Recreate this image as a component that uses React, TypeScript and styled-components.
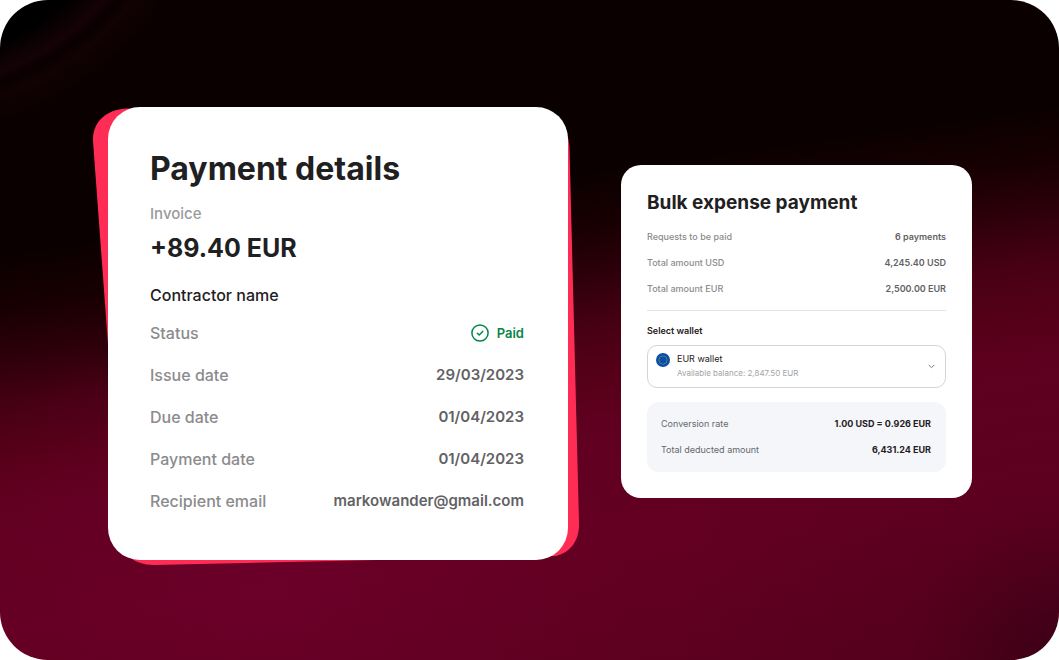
import React from "react";
import styled, { createGlobalStyle } from "styled-components";

const GlobalStyle = createGlobalStyle`
  *, *::before, *::after { box-sizing: border-box; }
  body {
    margin: 0;
    background: #ffffff;
    font-family: Inter, Roboto, sans-serif;
    color: #1f2022;
  }
  h1, h2, p, dl, dd { margin: 0; }
`;

const Stage = styled.main`
  display: grid;
  grid-template-columns: minmax(0, 460fr) minmax(0, 351fr);
  align-content: center;
  align-items: start;
  column-gap: 53px;
  min-height: 100vh;
  padding: 24px 87px 18px 108px;
  border-radius: 48px;
  background:
    radial-gradient(circle at -90px -170px, #000000 230px, rgba(22, 2, 6, 0.9) 258px, rgba(10, 0, 1, 0.8) 268px, rgba(20, 2, 5, 0.7) 280px, rgba(10, 0, 0, 0) 310px),
    radial-gradient(circle at 100% 100%, rgba(40, 0, 16, 0.6) 0, rgba(60, 0, 20, 0.2) 12%, rgba(60, 0, 20, 0) 32%),
    radial-gradient(ellipse at 25% 90%, rgba(112, 0, 44, 0.6) 0, rgba(108, 0, 40, 0) 32%),
    linear-gradient(172deg, #0a0000 0%, #0a0000 31%, #170002 38%, #2c000a 44%, #450014 50%, #560019 57%, #600020 63%, #640022 78%, #5a001e 100%);
`;

const DetailsWrap = styled.div`
  position: relative;
`;

const Backdrop = styled.svg`
  position: absolute;
  inset: 0;
  width: 100%;
  height: 100%;
  overflow: visible;
`;

const DetailsCard = styled.section`
  position: relative;
  padding: 42px 44px 38px 42px;
  border-radius: 32px;
  background: #ffffff;
`;

const Title = styled.h1`
  font-size: 32px;
  line-height: 40px;
  font-weight: 700;
`;

const Kind = styled.p`
  margin-top: 15px;
  font-size: 15px;
  line-height: 20px;
  font-weight: 500;
  color: #9a9a9c;
`;

const Amount = styled.p`
  margin-top: 8px;
  font-size: 25px;
  line-height: 32px;
  font-weight: 700;
`;

const Contractor = styled.h2`
  margin-top: 21px;
  margin-bottom: 7px;
  font-size: 16px;
  line-height: 20px;
  font-weight: 500;
`;

const Row = styled.div<{ $small?: boolean }>`
  display: flex;
  align-items: center;
  justify-content: space-between;
  gap: 12px;
  height: ${(p) => (p.$small ? 26 : 42)}px;
  font-size: ${(p) => (p.$small ? 9 : 15)}px;
`;

const Term = styled.dt<{ $large?: boolean; $plain?: boolean }>`
  font-size: ${(p) => (p.$large ? "16px" : "inherit")};
  font-weight: ${(p) => (p.$plain ? 400 : 500)};
  color: ${(p) => (p.$plain ? "#66686d" : "#8b8b8d")};
`;

const Value = styled.dd<{ $strong?: boolean }>`
  font-weight: ${(p) => (p.$strong ? 700 : 600)};
  color: ${(p) => (p.$strong ? "#1f2022" : "#626265")};
`;

const Paid = styled.dd`
  display: flex;
  align-items: center;
  gap: 8px;
  font-size: 13px;
  font-weight: 600;
  color: #078549;
`;

const BulkCard = styled.section`
  margin-top: 58px;
  padding: 24px 26px 26px;
  border-radius: 20px;
  background: #ffffff;
`;

const BulkTitle = styled.h2`
  margin-bottom: 7px;
  font-size: 19px;
  line-height: 28px;
  font-weight: 700;
`;

const Totals = styled.dl`
  padding-bottom: 8px;
  border-bottom: 1px solid #e4e4e6;
`;

const WalletLabel = styled.label`
  display: block;
  margin: 12px 0 6px;
  font-size: 9px;
  line-height: 16px;
  font-weight: 600;
`;

const WalletField = styled.div`
  display: flex;
  align-items: center;
  gap: 7px;
  height: 43px;
  padding: 0 10px 0 8px;
  border: 1px solid #d3d4d7;
  border-radius: 10px;
`;

const Flag = styled.svg`
  align-self: flex-start;
  flex: none;
  margin-top: 7px;
`;

const WalletText = styled.div`
  flex: 1;
  min-width: 0;
`;

const WalletSelect = styled.select`
  display: block;
  width: 100%;
  height: 14px;
  padding: 0;
  border: 0;
  appearance: none;
  background: transparent;
  font: 400 9px/14px Inter, Roboto, sans-serif;
  color: #1f2022;
`;

const Balance = styled.p`
  font-size: 8px;
  line-height: 14px;
  color: #a3a4a7;
`;

const Summary = styled.dl`
  margin-top: 14px;
  padding: 9px 15px 9px 14px;
  border-radius: 12px;
  background: #f4f6fa;
`;

const details = [
  ["Issue date", "29/03/2023"],
  ["Due date", "01/04/2023"],
  ["Payment date", "01/04/2023"],
  ["Recipient email", "markowander@gmail.com"],
];

const totals = [
  ["Requests to be paid", "6 payments"],
  ["Total amount USD", "4,245.40 USD"],
  ["Total amount EUR", "2,500.00 EUR"],
];

const summary = [
  ["Conversion rate", "1.00 USD = 0.926 EUR"],
  ["Total deducted amount", "6,431.24 EUR"],
];

const stars = Array.from({ length: 12 }, (_, i) => {
  const a = (i * Math.PI) / 6;
  return { x: 7 + 4 * Math.sin(a), y: 7 - 4 * Math.cos(a) };
});

export default function App() {
  return (
    <>
      <GlobalStyle />
      <Stage>
        <DetailsWrap>
          <Backdrop viewBox="0 0 460 453" preserveAspectRatio="none" aria-hidden="true">
            <path
              fill="#ff2d55"
              d="M-15 34C-16 14 0 2 19 1.500L424 6Q460 10 461.500 40L471 416C471.500 436 460 446 448 449L46 458C36 458 27 455 20 449L12 400Z"
            />
          </Backdrop>
          <DetailsCard>
            <Title>Payment details</Title>
            <Kind>Invoice</Kind>
            <Amount>+89.40 EUR</Amount>
            <Contractor>Contractor name</Contractor>
            <dl>
              <Row>
                <Term $large>Status</Term>
                <Paid>
                  <svg width="18" height="18" viewBox="0 0 18 18" fill="none" stroke="currentColor" strokeWidth="1.5" aria-hidden="true">
                    <circle cx="9" cy="9" r="8.1" />
                    <path d="M6.300 9.200L8.200 11L11.700 7.400" strokeLinecap="round" strokeLinejoin="round" />
                  </svg>
                  Paid
                </Paid>
              </Row>
              {details.map(([term, value]) => (
                <Row key={term}>
                  <Term $large>{term}</Term>
                  <Value>{value}</Value>
                </Row>
              ))}
            </dl>
          </DetailsCard>
        </DetailsWrap>

        <BulkCard>
          <BulkTitle>Bulk expense payment</BulkTitle>
          <Totals>
            {totals.map(([term, value]) => (
              <Row key={term} $small>
                <Term>{term}</Term>
                <Value>{value}</Value>
              </Row>
            ))}
          </Totals>
          <WalletLabel htmlFor="wallet">Select wallet</WalletLabel>
          <WalletField>
            <Flag width="14" height="14" viewBox="0 0 14 14" aria-hidden="true">
              <circle cx="7" cy="7" r="7" fill="#0b4ea8" />
              {stars.map((s, i) => (
                <circle key={i} cx={s.x} cy={s.y} r="0.5" fill="#b5c154" />
              ))}
            </Flag>
            <WalletText>
              <WalletSelect id="wallet" defaultValue="eur">
                <option value="eur">EUR wallet</option>
              </WalletSelect>
              <Balance>Available balance: 2,847.50 EUR</Balance>
            </WalletText>
            <svg width="7" height="7" viewBox="0 0 7 7" fill="none" stroke="#77787c" aria-hidden="true">
              <path d="M1 2.200L3.500 4.700L6 2.200" strokeLinecap="round" strokeLinejoin="round" />
            </svg>
          </WalletField>
          <Summary>
            {summary.map(([term, value]) => (
              <Row key={term} $small>
                <Term $plain>{term}</Term>
                <Value $strong>{value}</Value>
              </Row>
            ))}
          </Summary>
        </BulkCard>
      </Stage>
    </>
  );
}
